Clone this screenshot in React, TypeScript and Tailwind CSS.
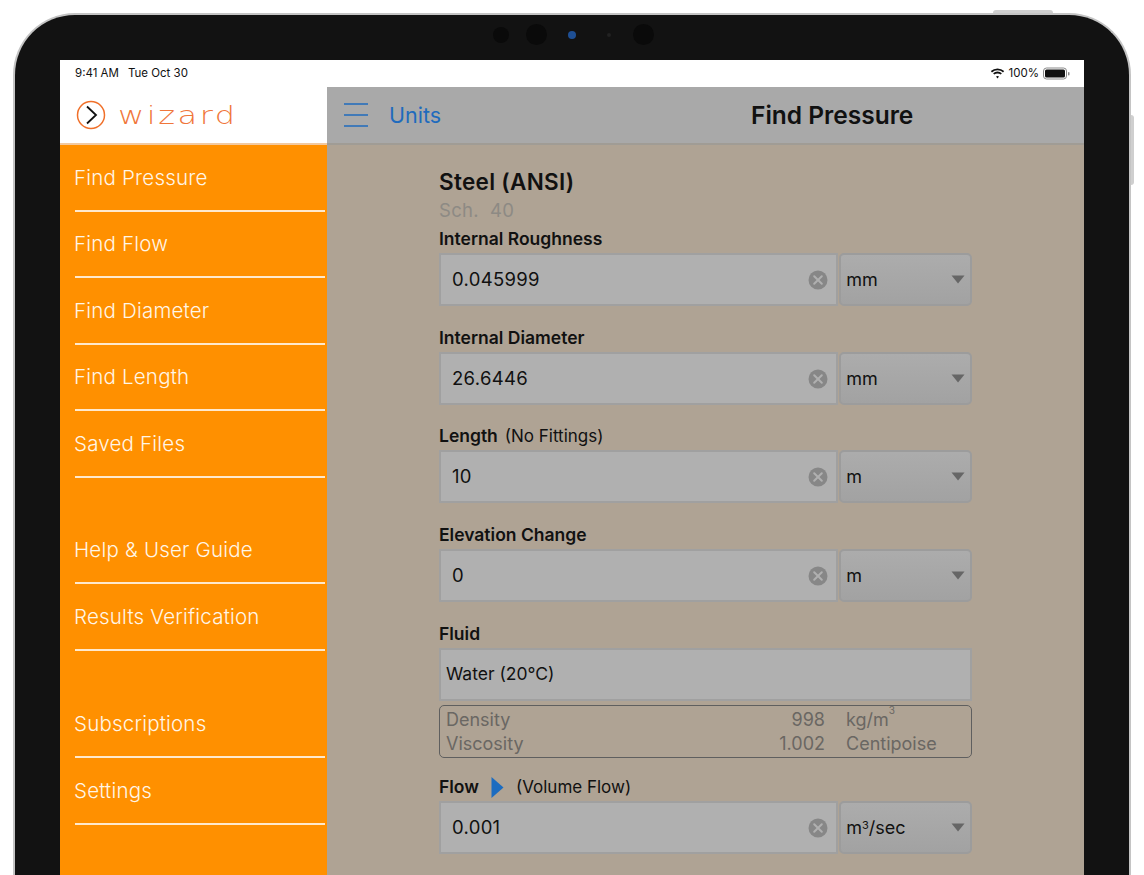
import React from 'react';

const FONT = "font-['Inter','Noto_Sans',sans-serif]";

const MenuRow = ({ label }: { label: string }) => (
  <div className="h-[66.5px] flex flex-col pl-[14px]">
    <div className="flex-1 flex items-center pt-[1px] text-[20.5px] leading-none tracking-[0.2px] text-[#fff6e8] font-light">{label}</div>
    <div className="ml-[1px] mr-[2px] h-[2px] bg-[#ffe9cc]" />
  </div>
);

const ClearIcon = () => (
  <svg width="20" height="20" viewBox="0 0 20 20" className="shrink-0">
    <circle cx="10" cy="10" r="9.5" fill="#878787" />
    <path d="M6.2 6.2l7.6 7.6M13.8 6.2l-7.6 7.6" stroke="#b0b0b0" strokeWidth="2" strokeLinecap="round" />
  </svg>
);

const Caret = () => (
  <svg width="14" height="9" viewBox="0 0 14 9" className="shrink-0">
    <path d="M0.5 0.5h13L7 8.5z" fill="#666666" />
  </svg>
);

const Field = ({ value, unit }: { value: string; unit: React.ReactNode }) => (
  <div className="flex h-[53px]">
    <div className="w-[400px] flex items-center justify-between bg-[#b0b0b0] border-2 border-[#a0a0a0] pl-[11px] pr-[8px] text-[18.5px] tracking-[0.3px] text-[#111]">
      <span>{value}</span>
      <ClearIcon />
    </div>
    <div className="ml-[1px] w-[133px] flex items-center justify-between rounded-[5px] border-2 border-[#9c9c9c] bg-gradient-to-b from-[#acacac] to-[#a2a2a2] pl-[5px] pr-[5px] text-[18px] text-[#111]">
      <span>{unit}</span>
      <Caret />
    </div>
  </div>
);

const Label = ({ children }: { children: React.ReactNode }) => (
  <div className="h-[28px] flex items-center text-[17.5px] leading-none font-semibold text-[#111]">{children}</div>
);

export default function App() {
  return (
    <div className={`${FONT} w-[1144px] h-[875px] overflow-hidden bg-white pt-[13px] px-[13px]`}>
      <div className="relative h-[900px] rounded-t-[62px] border-[2.5px] border-b-0 border-[#c4c4c4] bg-[#121212] px-[45px] pt-[45px]">
        {/* volume and power buttons */}
        <div className="absolute -top-[5px] right-[76px] w-[60px] h-[3px] rounded-t-sm bg-[#cfcfcf]" />
        <div className="absolute top-[100px] -right-[5px] w-[3px] h-[70px] rounded-r-sm bg-[#cfcfcf]" />
        {/* camera strip */}
        <div className="absolute top-[9px] left-[478px] flex items-center">
          <div className="w-[16px] h-[16px] rounded-full bg-[#0a0a0a]" />
          <div className="ml-[17px] w-[21px] h-[21px] rounded-full bg-[#0a0a0a]" />
          <div className="ml-[21px] w-[8px] h-[8px] rounded-full bg-[#1e4f94]" />
          <div className="ml-[31px] w-[4px] h-[4px] rounded-full bg-[#222]" />
          <div className="ml-[22px] w-[21px] h-[21px] rounded-full bg-[#0a0a0a]" />
        </div>

        <div className="bg-white h-[900px]">
          {/* status bar */}
          <div className="h-[27px] flex items-center justify-between pl-[15px] pr-[14px] text-[11.5px] text-[#111]">
            <div className="flex gap-[9px]">
              <span>9:41 AM</span>
              <span>Tue Oct 30</span>
            </div>
            <div className="flex items-center gap-[4px]">
              <svg width="15" height="11" viewBox="0 0 15 11">
                <path d="M7.5 2.2c2.1 0 4 .8 5.5 2.2l1.2-1.3A9.8 9.8 0 0 0 7.5.4 9.8 9.8 0 0 0 .8 3.1L2 4.4a8 8 0 0 1 5.5-2.2z" fill="#111" />
                <path d="M7.5 5.4c1.2 0 2.3.4 3.2 1.2l1.2-1.3a6.5 6.5 0 0 0-8.8 0l1.2 1.3c.9-.8 2-1.2 3.2-1.2z" fill="#111" />
                <path d="M7.5 8c-.6 0-1.1.2-1.5.6l1.5 1.9L9 8.6C8.600 8.200 8.100 8 7.500 8z" fill="#111" />
              </svg>
              <span>100%</span>
              <svg width="27" height="13" viewBox="0 0 27 13" className="ml-[0px]">
                <rect x="0.5" y="1" width="23" height="11" rx="3" fill="none" stroke="#888" />
                <rect x="2" y="2.500" width="20" height="8" rx="1.500" fill="#111" />
                <rect x="25" y="5" width="1.500" height="3.500" rx="0.700" fill="#888" />
              </svg>
            </div>
          </div>

          <div className="flex h-[860px]">
            {/* sidebar */}
            <div className="w-[267px] shrink-0 flex flex-col">
              <div className="h-[58px] flex items-center pl-[16px] border-b-2 border-[#f2c9a0]">
                <svg width="30" height="30" viewBox="0 0 30 30" className="shrink-0">
                  <circle cx="15" cy="15" r="13.500" fill="none" stroke="#f0702a" strokeWidth="1.500" />
                  <path d="M11 6.500L20 15l-9 8.500" fill="none" stroke="#111" strokeWidth="1.800" />
                </svg>
                <span className="ml-[12px] font-['DejaVu_Sans',sans-serif] text-[25px] leading-none font-extralight tracking-[2px] text-[#f0763a] origin-left scale-x-[1.28]">wizard</span>
              </div>
              <div className="flex-1 bg-[#ff9000] flex flex-col">
                <MenuRow label="Find Pressure" />
                <MenuRow label="Find Flow" />
                <MenuRow label="Find Diameter" />
                <MenuRow label="Find Length" />
                <MenuRow label="Saved Files" />
                <div className="h-[40px]" />
                <MenuRow label="Help & User Guide" />
                <MenuRow label="Results Verification" />
                <div className="h-[41px]" />
                <MenuRow label="Subscriptions" />
                <MenuRow label="Settings" />
              </div>
            </div>

            {/* main panel */}
            <div className="flex-1 min-w-0 flex flex-col bg-[#afa394]">
              <div className="h-[58px] shrink-0 flex items-center bg-[#a9a9a9] border-b-2 border-[#a09c95] pl-[17px] relative">
                <svg width="25" height="26" viewBox="0 0 25 26" className="shrink-0">
                  <path d="M0 2h24M0 13h24M0 24h24" stroke="#1f6bbd" strokeWidth="1.500" />
                </svg>
                <span className="ml-[20px] text-[21.5px] text-[#1f6bbd]">Units</span>
                <span className="absolute left-[424px] text-[24.5px] font-semibold text-[#111]">Find Pressure</span>
              </div>

              <div className="pl-[112px] w-[645px]">
                <div className="pt-[22px] text-[22.5px] leading-[30px] font-semibold text-[#111] tracking-[0.3px]">Steel (ANSI)</div>
                <div className="text-[18.5px] leading-[26px] text-[#8d8a84] tracking-[0.3px]">Sch.&nbsp; 40</div>
                <div className="pt-[2px]"><Label>Internal Roughness</Label></div>
                <Field value="0.045999" unit="mm" />
                <div className="pt-[18px]"><Label>Internal Diameter</Label></div>
                <Field value="26.6446" unit="mm" />
                <div className="pt-[17px]">
                  <Label>
                    Length
                    <span className="ml-[7px] text-[17px] font-normal">(No Fittings)</span>
                  </Label>
                </div>
                <Field value="10" unit="m" />
                <div className="pt-[18px]"><Label>Elevation Change</Label></div>
                <Field value="0" unit="m" />
                <div className="pt-[18px]"><Label>Fluid</Label></div>
                <div className="h-[53px] flex items-center bg-[#b0b0b0] border-2 border-[#a0a0a0] pl-[5px] text-[17.5px] text-[#111]">Water (20°C)</div>
                <div className="mt-[4px] h-[53px] rounded-[5px] border-[1.5px] border-[#5f5f5f] pl-[6px] flex flex-col justify-center text-[18px] leading-[24px] text-[#6a6763]">
                  <div className="flex">
                    <span className="w-[340px]">Density</span>
                    <span className="w-[39px] text-right">998</span>
                    <span className="ml-[21px]">kg/m<sup className="text-[10px] align-super leading-none">3</sup></span>
                  </div>
                  <div className="flex">
                    <span className="w-[340px]">Viscosity</span>
                    <span className="w-[39px] flex justify-end whitespace-nowrap">1.002</span>
                    <span className="ml-[21px]">Centipoise</span>
                  </div>
                </div>
                <div className="pt-[15px]">
                  <Label>
                    Flow
                    <svg width="13" height="21" viewBox="0 0 13 21" className="ml-[12px] shrink-0">
                      <path d="M0.5 0L12.500 10.500L0.500 21z" fill="#1c6cc0" />
                    </svg>
                    <span className="ml-[12px] text-[17px] font-normal">(Volume Flow)</span>
                  </Label>
                </div>
                <Field value="0.001" unit={<>m<sup className="text-[11px]">3</sup>/sec</>} />
              </div>
            </div>
          </div>
        </div>
      </div>
    </div>
  );
}
